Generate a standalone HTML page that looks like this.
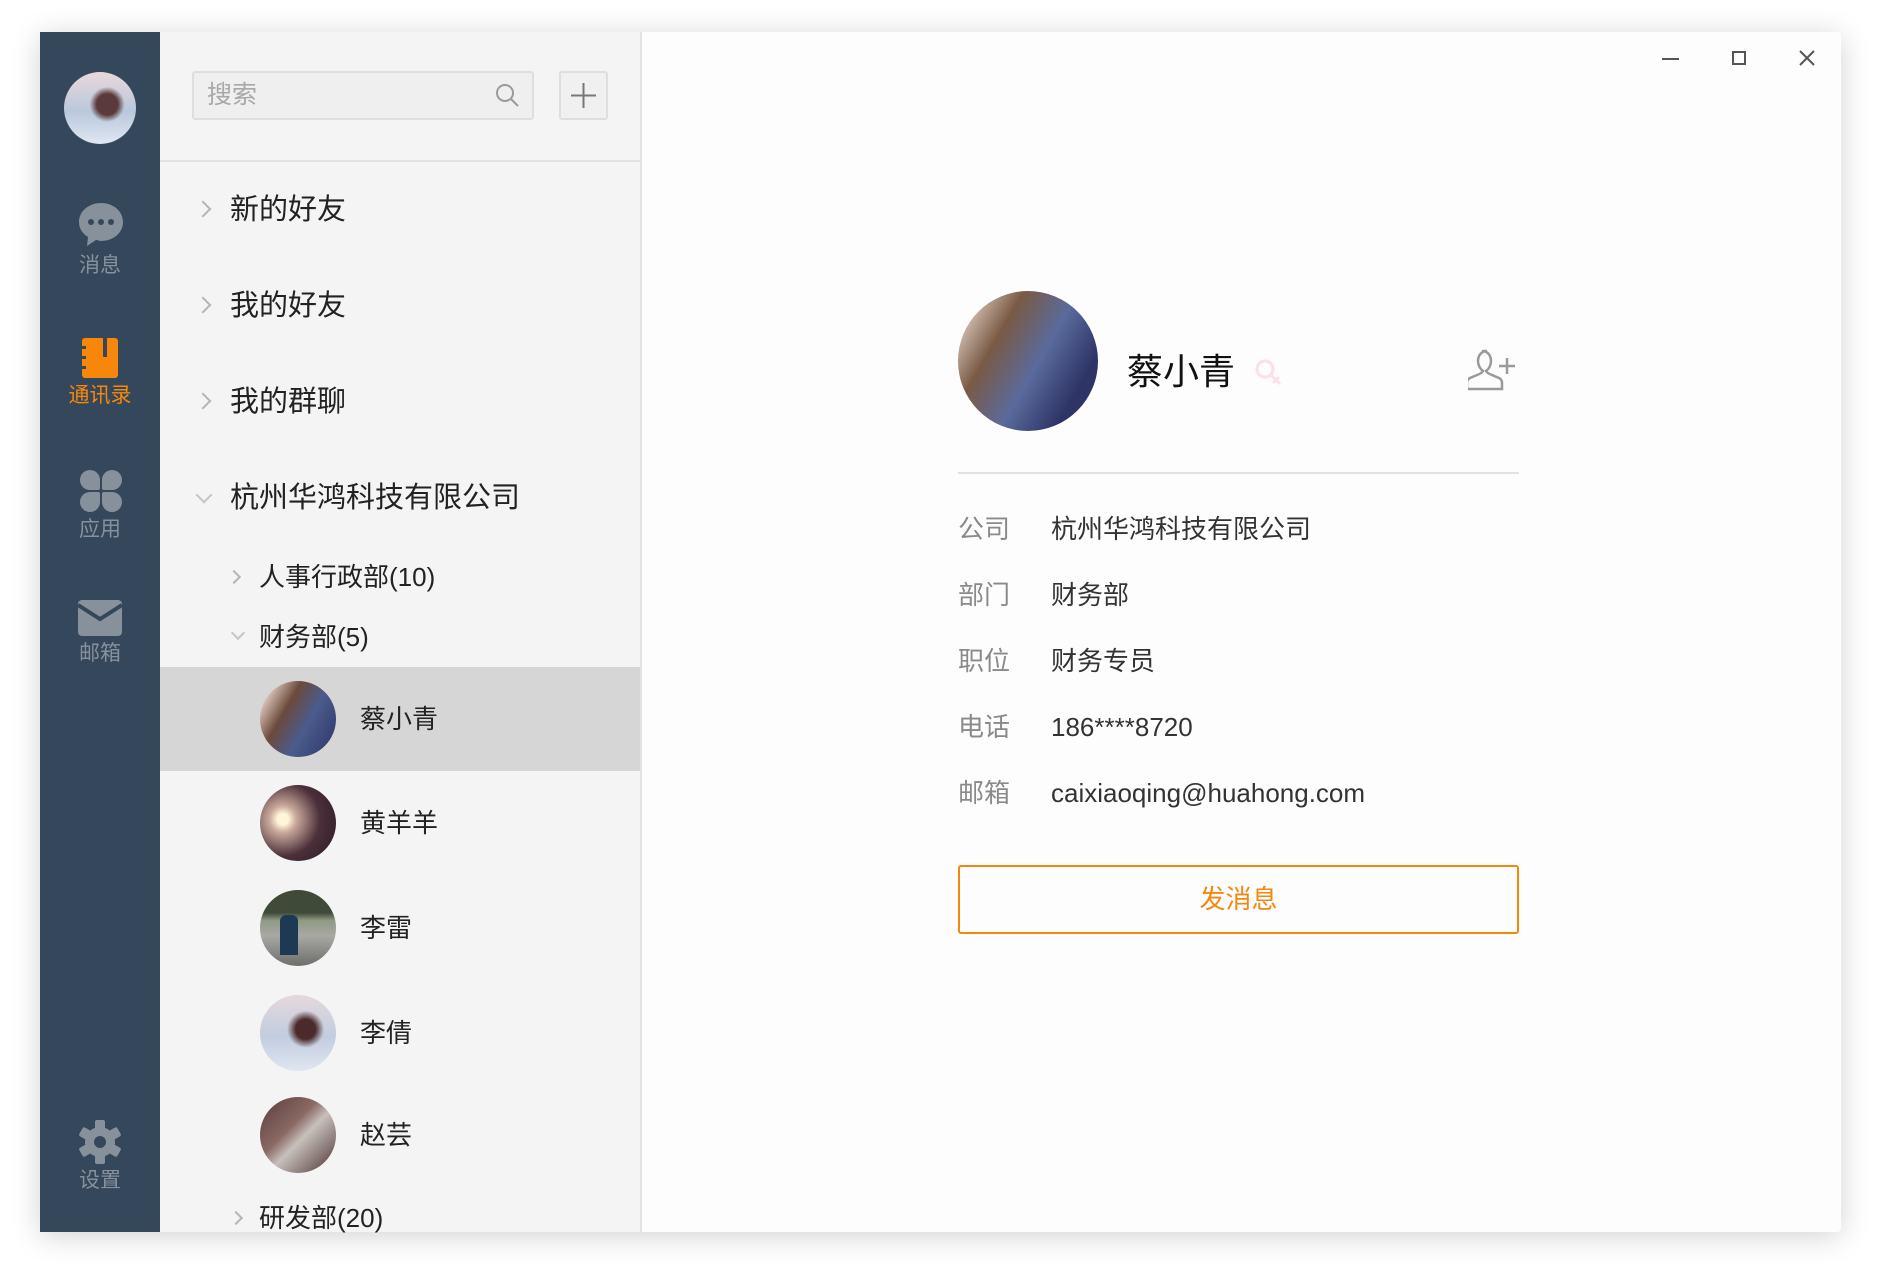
<!DOCTYPE html>
<html><head><meta charset="utf-8"><style>
*{margin:0;padding:0;box-sizing:border-box}
body{width:1880px;height:1280px;background:#fff;position:relative;overflow:hidden;font-family:"Liberation Sans","Noto Sans CJK SC",sans-serif}
.a{position:absolute}
.t{position:absolute;white-space:nowrap;line-height:40px;height:40px}
#win{left:40px;top:32px;width:1801px;height:1200px;box-shadow:0 4px 30px rgba(0,0,0,.18);border-radius:4px;overflow:hidden;background:#fdfdfd}
.side{left:40px;top:32px;width:120px;height:1200px;background:#35475a}
.mid{left:160px;top:32px;width:482px;height:1200px;background:#f4f4f4;border-right:2px solid #e2e2e2}
.nl{left:40px;width:120px;text-align:center;font-size:21px;color:#86919c}
.av{border-radius:50%}
.chev{position:absolute;width:12px;height:12px;border-right:2px solid #b5b5b5;border-top:2px solid #b5b5b5}
.g1{font-size:29px;color:#222}
.g2{font-size:26px;color:#222}
.lab{left:958px;font-size:26px;color:#8a8a8a}
.val{left:1051px;font-size:26px;color:#333}
</style></head><body>
<div class="a" id="win"></div>
<div class="a side"></div>
<div class="a mid"></div>
<!-- sidebar -->
<div class="a av" style="left:64px;top:72px;width:72px;height:72px;background:radial-gradient(circle at 60% 45%,#5a3a3a 0 18%,transparent 30%),linear-gradient(180deg,#e9d8dc,#b9c8dc 55%,#dfe7f2)"></div>
<svg class="a" style="left:76px;top:200px" width="50" height="50" viewBox="0 0 50 50"><path d="M25 3C13 3 3 11 3 22c0 7 4 12 9 15l-1 9 9-6c2 0 3 1 5 1 12 0 22-8 22-19S37 3 25 3z" fill="#86919c"/><circle cx="15" cy="22" r="3" fill="#35475a"/><circle cx="25" cy="22" r="3" fill="#35475a"/><circle cx="35" cy="22" r="3" fill="#35475a"/></svg>
<div class="t nl" style="top:246px">消息</div>
<svg class="a" style="left:80px;top:338px" width="40" height="40" viewBox="0 0 40 40"><rect x="2" y="0" width="36" height="40" rx="3" fill="#f7870a"/><rect x="23" y="0" width="4" height="19" fill="#35475a"/><rect x="0" y="8" width="6" height="3" fill="#35475a"/><rect x="0" y="18" width="6" height="3" fill="#35475a"/><rect x="0" y="28" width="6" height="3" fill="#35475a"/></svg>
<div class="t nl" style="top:376px;color:#f7870a">通讯录</div>
<svg class="a" style="left:78px;top:468px" width="44" height="44" viewBox="0 0 44 44" fill="#86919c"><path d="M2 12a10 10 0 0 1 20 0v8a2 2 0 0 1-2 2h-8A10 10 0 0 1 2 12z"/><path d="M42 12a10 10 0 0 0-20 0v8a2 2 0 0 0 2 2h8A10 10 0 0 0 42 12z" transform="translate(2 0)"/><path d="M2 32a10 10 0 0 0 20 0v-8a2 2 0 0 0-2-2h-8A10 10 0 0 0 2 32z" transform="translate(0 2)"/><path d="M42 32a10 10 0 0 1-20 0v-8a2 2 0 0 1 2-2h8A10 10 0 0 1 42 32z" transform="translate(2 2)"/></svg>
<div class="t nl" style="top:510px">应用</div>
<svg class="a" style="left:78px;top:600px" width="44" height="36" viewBox="0 0 44 36"><rect x="0" y="0" width="44" height="36" rx="4" fill="#86919c"/><path d="M0 5l22 14L44 5" stroke="#35475a" stroke-width="4" fill="none"/></svg>
<div class="t nl" style="top:634px">邮箱</div>
<svg class="a" style="left:78px;top:1120px" width="44" height="44" viewBox="0 0 44 44"><g fill="#86919c" transform="translate(22 22)"><circle r="15"/><g id="tt"><rect x="-5" y="-22" width="10" height="10" rx="2"/></g><use href="#tt" transform="rotate(60)"/><use href="#tt" transform="rotate(120)"/><use href="#tt" transform="rotate(180)"/><use href="#tt" transform="rotate(240)"/><use href="#tt" transform="rotate(300)"/></g><circle cx="22" cy="22" r="6" fill="#35475a"/></svg>
<div class="t nl" style="top:1161px">设置</div>
<!-- middle -->
<div class="a" style="left:192px;top:71px;width:342px;height:49px;border:2px solid #dedede;background:#efefef;border-radius:3px"></div>
<div class="t" style="left:207px;top:75px;font-size:25px;color:#a8a8a8">搜索</div>
<svg class="a" style="left:495px;top:83px" width="26" height="26" viewBox="0 0 26 26"><circle cx="10" cy="10" r="8" stroke="#9a9a9a" stroke-width="2" fill="none"/><path d="M16 16l7 7" stroke="#9a9a9a" stroke-width="2"/></svg>
<div class="a" style="left:559px;top:71px;width:49px;height:49px;border:2px solid #dedede;background:#f0f0f0;border-radius:3px"></div>
<svg class="a" style="left:569px;top:81px" width="29" height="29"><path d="M14.5 2v25M2 14.5h25" stroke="#777" stroke-width="2"/></svg>
<div class="a" style="left:160px;top:160px;width:482px;height:2px;background:#e2e2e2"></div>
<div class="chev" style="left:197px;top:203px;transform:rotate(45deg)"></div>
<div class="t g1" style="left:230px;top:190px">新的好友</div>
<div class="chev" style="left:197px;top:299px;transform:rotate(45deg)"></div>
<div class="t g1" style="left:230px;top:286px">我的好友</div>
<div class="chev" style="left:197px;top:395px;transform:rotate(45deg)"></div>
<div class="t g1" style="left:230px;top:382px">我的群聊</div>
<div class="chev" style="left:198px;top:489px;transform:rotate(135deg);border-color:#c5c5c5"></div>
<div class="t g1" style="left:230px;top:478px">杭州华鸿科技有限公司</div>
<div class="chev" style="left:229px;top:572px;width:10px;height:10px;transform:rotate(45deg)"></div>
<div class="t g2" style="left:259px;top:557px">人事行政部(10)</div>
<div class="chev" style="left:233px;top:628px;width:10px;height:10px;transform:rotate(135deg);border-color:#c5c5c5"></div>
<div class="t g2" style="left:259px;top:617px">财务部(5)</div>
<div class="a" style="left:160px;top:667px;width:480px;height:104px;background:#d6d6d6"></div>
<div class="a av" style="left:260px;top:681px;width:76px;height:76px;background:linear-gradient(120deg,#e9d3c8 10%,#6b4a3c 35%,#4a5b8c 60%,#2d3566)"></div>
<div class="t g2" style="left:360px;top:699px">蔡小青</div>
<div class="a av" style="left:260px;top:785px;width:76px;height:76px;background:radial-gradient(circle at 30% 45%,#fff6d8 0 8%,#c9a89a 20%,#4b2f3a 55%,#2a1a24)"></div>
<div class="t g2" style="left:360px;top:803px">黄羊羊</div>
<div class="a av" style="left:260px;top:890px;width:76px;height:76px;background:linear-gradient(180deg,#3f4a38 0 30%,#8e9a84 40%,#a8a8a4 60%,#6e6e6a)"></div>
<div class="a" style="left:280px;top:915px;width:18px;height:40px;background:#1e3a52;border-radius:6px 6px 0 0"></div>
<div class="t g2" style="left:360px;top:908px">李雷</div>
<div class="a av" style="left:260px;top:995px;width:76px;height:76px;background:radial-gradient(circle at 60% 45%,#4a2a2a 0 16%,transparent 30%),linear-gradient(180deg,#e5d8dc,#c1cde0 55%,#e0e6f0)"></div>
<div class="t g2" style="left:360px;top:1013px">李倩</div>
<div class="a av" style="left:260px;top:1097px;width:76px;height:76px;background:linear-gradient(135deg,#5a3a3c,#8a6a64 40%,#c8c0bc 55%,#4a3030)"></div>
<div class="t g2" style="left:360px;top:1115px">赵芸</div>
<div class="chev" style="left:231px;top:1213px;width:10px;height:10px;transform:rotate(45deg)"></div>
<div class="t g2" style="left:259px;top:1198px">研发部(20)</div>
<!-- right -->
<div class="a" style="left:1662px;top:58px;width:17px;height:2px;background:#555"></div>
<div class="a" style="left:1732px;top:51px;width:14px;height:14px;border:2px solid #555"></div>
<svg class="a" style="left:1798px;top:49px" width="18" height="18"><path d="M2 2l14 14M16 2L2 16" stroke="#555" stroke-width="2"/></svg>
<div class="a av" style="left:958px;top:291px;width:140px;height:140px;background:linear-gradient(120deg,#ecdcd2 5%,#7a5a44 30%,#5a6a9c 55%,#2e3466 80%)"></div>
<div class="t" style="left:1127px;top:350px;font-size:36px;height:44px;line-height:44px;color:#111">蔡小青</div>
<svg class="a" style="left:1254px;top:358px" width="30" height="30"><circle cx="11" cy="11" r="8" stroke="#fbe0e8" stroke-width="3" fill="none"/><path d="M17 17l9 9M19 25l6-6" stroke="#fbe0e8" stroke-width="3"/></svg>
<svg class="a" style="left:1468px;top:348px" width="48" height="46" viewBox="0 0 48 46"><path d="M18 3c6 0 9 5 9 10 0 4-2 8-5 10 1 2 3 3 6 4l7 3c2 1 3 3 3 5v6H3v-6c0-2 1-4 3-5l7-3c3-1 5-2 6-4-3-2-5-6-5-10 0-5 3-10 9-10z" transform="translate(-4 0)" stroke="#9a9a9a" stroke-width="2.5" fill="none"/><path d="M39 10v16M31 18h16" stroke="#9a9a9a" stroke-width="2.5"/></svg>
<div class="a" style="left:958px;top:472px;width:561px;height:2px;background:#e2e2e2"></div>
<div class="t lab" style="top:509px">公司</div><div class="t val" style="top:509px">杭州华鸿科技有限公司</div>
<div class="t lab" style="top:575px">部门</div><div class="t val" style="top:575px">财务部</div>
<div class="t lab" style="top:641px">职位</div><div class="t val" style="top:641px">财务专员</div>
<div class="t lab" style="top:707px">电话</div><div class="t val" style="top:707px">186****8720</div>
<div class="t lab" style="top:773px">邮箱</div><div class="t val" style="top:773px">caixiaoqing@huahong.com</div>
<div class="a" style="left:958px;top:865px;width:561px;height:69px;border:2px solid #f3870f;border-radius:3px;color:#f3870f;font-size:26px;text-align:center;line-height:65px">发消息</div>
</body></html>
